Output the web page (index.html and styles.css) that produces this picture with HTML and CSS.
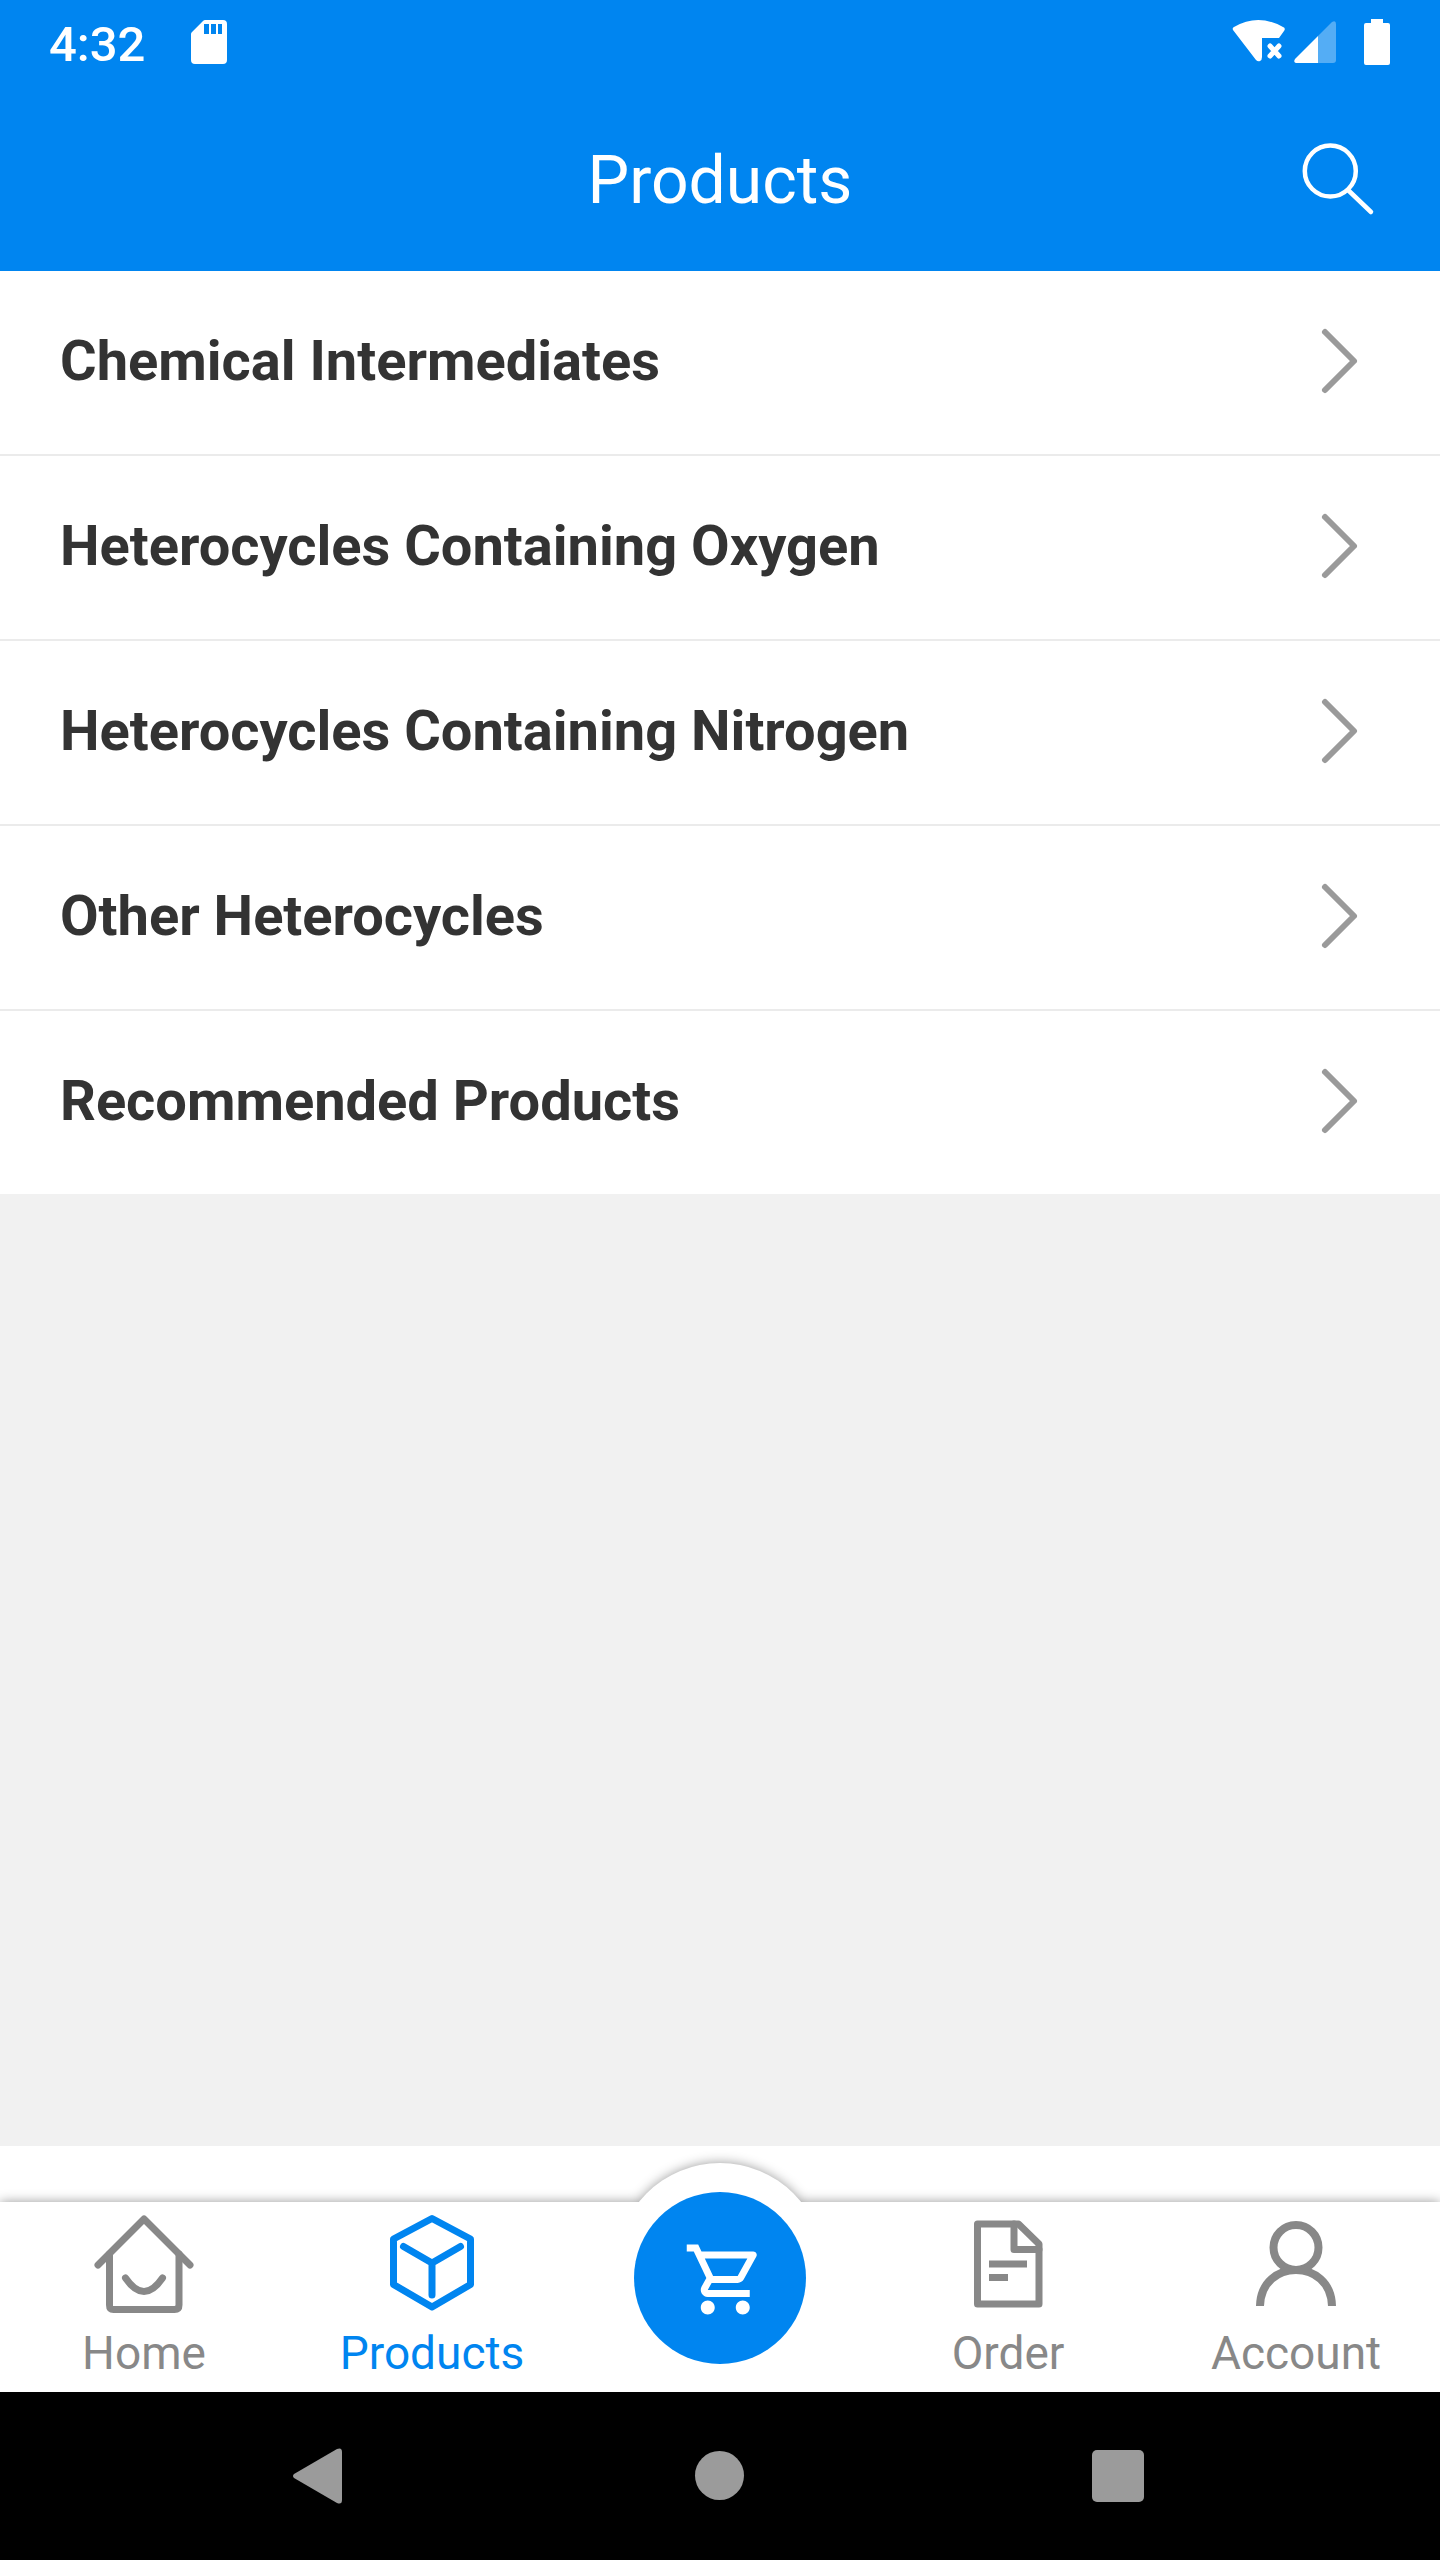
FILE: index.html
```html
<!DOCTYPE html>
<html lang="en">
<head>
    <meta charset="UTF-8">
    <meta name="viewport" content="width=device-width, initial-scale=1.0">
    <title>Products</title>
    <link rel="stylesheet" href="styles.css">
</head>
<body>
    <div class="status-bar">
        <span class="clock">4:32</span>
        <svg class="icon-sd" width="36" height="44" viewBox="0 0 36 44">
            <path fill="#fff" fill-rule="evenodd" d="M14 0h18a4 4 0 0 1 4 4v36a4 4 0 0 1-4 4H4a4 4 0 0 1-4-4V14q0-1 1-2L12 1q1-1 2-1zM13 4v10h5V4zM20 4v10h5V4zM27 4v10h4V4z"/>
        </svg>
        <div class="status-icons">
            <svg width="54" height="46" viewBox="0 0 54 46">
                <path fill="#fff" d="M1 11Q0 9 2 8Q26-6 51 8Q54 9 52 12L47 19H30v19q0 3-2 4q-2 1-4-1z"/>
                <path stroke="#fff" stroke-width="5" stroke-linecap="round" d="M38 27l9 10M47 27l-9 10"/>
            </svg>
            <svg width="42" height="46" viewBox="0 0 42 46">
                <path fill="#fff" opacity=".33" d="M24 17L38 3q4-2 4 2v36q0 3-3 3H24z"/>
                <path fill="#fff" d="M24 17v27H2q-3-1-1-4z"/>
            </svg>
            <svg class="icon-battery" width="26" height="46" viewBox="0 0 26 46">
                <path fill="#fff" d="M7 0h12v4h5q2 0 2 2v38q0 2-2 2H2q-2 0-2-2V6q0-2 2-2h5z"/>
            </svg>
        </div>
    </div>

    <header class="header">
        <h1>Products</h1>
        <button class="search-btn" type="button" aria-label="Search">
            <svg width="72" height="72" viewBox="0 0 72 72" fill="none" stroke="#fff" stroke-width="4.5" stroke-linecap="round">
                <circle cx="28.3" cy="26" r="25.5"/>
                <path d="M46 45l23 22"/>
            </svg>
        </button>
    </header>

    <main class="content">
        <ul class="category-list">
            <li>
                <a href="#">Chemical Intermediates
                    <svg width="36" height="64" viewBox="0 0 36 64"><path d="M3 3l29 29L3 61"/></svg>
                </a>
            </li>
            <li>
                <a href="#">Heterocycles Containing Oxygen
                    <svg width="36" height="64" viewBox="0 0 36 64"><path d="M3 3l29 29L3 61"/></svg>
                </a>
            </li>
            <li>
                <a href="#">Heterocycles Containing Nitrogen
                    <svg width="36" height="64" viewBox="0 0 36 64"><path d="M3 3l29 29L3 61"/></svg>
                </a>
            </li>
            <li>
                <a href="#">Other Heterocycles
                    <svg width="36" height="64" viewBox="0 0 36 64"><path d="M3 3l29 29L3 61"/></svg>
                </a>
            </li>
            <li>
                <a href="#">Recommended Products
                    <svg width="36" height="64" viewBox="0 0 36 64"><path d="M3 3l29 29L3 61"/></svg>
                </a>
            </li>
        </ul>
    </main>

    <!-- bottom tabs -->
    <div class="tab-area">
        <nav class="tabs">
            <a class="tab" href="#">
                <svg width="96" height="100" viewBox="0 0 96 100">
                    <path d="M2 51L48 5l46 46"/>
                    <path d="M13.5 40v51q0 4.500 4 4.500h61q4.500 0 4.500-4.500V40"/>
                    <path d="M29.500 64Q48 91 66.500 64"/>
                </svg>
                Home
            </a>
            <a class="tab active" href="#">
                <svg width="96" height="100" viewBox="0 0 96 100">
                    <path d="M48 4.500L86.500 25v45.500L48 93L9.500 70.500V25z"/>
                    <path d="M19.500 32.500L48 49l28.500-16.500M48 49v32"/>
                </svg>
                Products
            </a>
            <a class="cart" href="#" aria-label="Cart">
                <svg width="84" height="84" viewBox="-1.500 -.4 24 24">
                    <path d="M15.550 13c.75 0 1.410-.41 1.750-1.030l3.580-6.490c.37-.66-.11-1.480-.87-1.480H5.210l-.94-2H1v2h2l3.600 7.590-1.350 2.440C4.520 15.370 5.480 17 7 17h12v-2H7l1.100-2h7.450zM6.160 6h12.150l-2.760 5H8.530L6.160 6zM7 18c-1.100 0-1.990.9-1.990 2S5.900 22 7 22s2-.9 2-2-.9-2-2-2zm10 0c-1.100 0-1.990.9-1.990 2s.89 2 1.990 2 2-.9 2-2-.9-2-2-2z"/>
                </svg>
            </a>
            <a class="tab" href="#">
                <svg width="96" height="100" viewBox="0 0 96 100">
                    <path d="M17.500 10h41L79 30v60H17.500z"/>
                    <path d="M54 10v25.500h25"/>
                    <path stroke-linecap="butt" d="M29 50h38M29 63.500h19"/>
                </svg>
                Order
            </a>
            <a class="tab" href="#">
                <svg width="96" height="100" viewBox="0 0 96 100">
                    <g stroke-width="8" stroke-linecap="butt">
                        <circle cx="48" cy="33.500" r="22.500"/>
                        <path d="M12 92C13 44 83 44 84 92"/>
                    </g>
                </svg>
                Account
            </a>
        </nav>
    </div>

    <!-- system navigation -->
    <div class="system-nav">
        <button type="button" aria-label="Back">
            <svg width="60" height="60" viewBox="0 0 60 60"><path d="M4 28L47 3q5-2 5 3v48q0 5-5 3L4 32q-2-2 0-4z"/></svg>
        </button>
        <button type="button" aria-label="Home">
            <svg width="60" height="60" viewBox="0 0 60 60"><circle cx="29.500" cy="29.500" r="24.500"/></svg>
        </button>
        <button type="button" aria-label="Recent apps">
            <svg width="60" height="60" viewBox="0 0 60 60"><rect x="2" y="4" width="52" height="52" rx="5"/></svg>
        </button>
    </div>
</body>
</html>
```
FILE: styles.css
```css
* {
    box-sizing: border-box;
}

body {
    display: flex;
    flex-direction: column;
    min-height: 100vh;
    margin: 0;
    background-color: #fff;
    font-family: Roboto, "Liberation Sans", sans-serif;
}

a {
    text-decoration: none;
}

svg {
    display: block;
    flex-shrink: 0;
    overflow: visible;
}

button {
    padding: 0;
    border: 0;
    background: none;
}

.status-bar {
    display: flex;
    align-items: center;
    height: 90px;
    padding: 0 50px 2px 49px;
    background-color: #0085f0;
    color: #fff;
}

.clock {
    font-size: 49px;
    font-weight: 500;
}

.icon-sd {
    margin: 0 0 4px 46px;
}

.status-icons {
    display: flex;
    gap: 8px;
    margin: 0 0 4px auto;
}

.icon-battery {
    margin-left: 20px;
}

/* title stays centred, search button sits on the right */
.header {
    display: grid;
    grid-template-columns: 1fr auto 1fr;
    align-items: center;
    height: 181px;
    padding: 0 66px;
    background-color: #0085f0;
    color: #fff;
}

.header h1 {
    grid-column: 2;
    margin: 0;
    font-size: 66px;
    font-weight: 400;
}

.search-btn {
    justify-self: end;
}

.content {
    flex: 1;
    background-color: #f1f1f1;
}

.category-list {
    margin: 0;
    padding: 0;
    list-style: none;
    background-color: #fff;
}

.category-list li + li {
    border-top: 2px solid #ebebeb;
}

.category-list a {
    display: flex;
    align-items: center;
    justify-content: space-between;
    height: 183px;
    padding: 0 82px 3px 60px;
    color: #333;
    font-size: 56px;
    font-weight: 700;
}

.category-list svg {
    fill: none;
    stroke: #9a9a9a;
    stroke-width: 6;
    stroke-linecap: round;
    stroke-linejoin: round;
}

.tab-area {
    padding-top: 56px;
    background-color: #fff;
}

/* one shadow around the bar and the round bump together */
.tabs {
    position: relative;
    display: grid;
    grid-template-columns: repeat(5, 1fr);
    background-color: #fff;
    filter: drop-shadow(0 0 6px rgba(0, 0, 0, 0.4));
}

.tabs::before {
    content: "";
    position: absolute;
    top: -39px;
    left: calc(50% - 104px);
    width: 208px;
    height: 208px;
    border-radius: 50%;
    background-color: #fff;
}

.tab {
    position: relative;
    display: flex;
    flex-direction: column;
    align-items: center;
    gap: 12px;
    padding: 12px 0;
    color: #888;
    font-size: 46px;
    line-height: 54px;
}

.tab svg {
    fill: none;
    stroke: currentColor;
    stroke-width: 7;
    stroke-linecap: round;
    stroke-linejoin: round;
}

.tab.active {
    color: #0085f0;
}

.cart {
    position: relative;
    display: flex;
    align-items: center;
    justify-content: center;
    justify-self: center;
    width: 172px;
    height: 172px;
    margin-top: -10px;
    border-radius: 50%;
    background-color: #0085f0;
}

.cart svg {
    fill: #fff;
}

.system-nav {
    position: relative;
    display: grid;
    grid-template-columns: repeat(3, 1fr);
    align-items: center;
    justify-items: center;
    height: 168px;
    padding: 0 120px;
    background-color: #000;
}

.system-nav svg {
    fill: #9b9b9b;
}
```
